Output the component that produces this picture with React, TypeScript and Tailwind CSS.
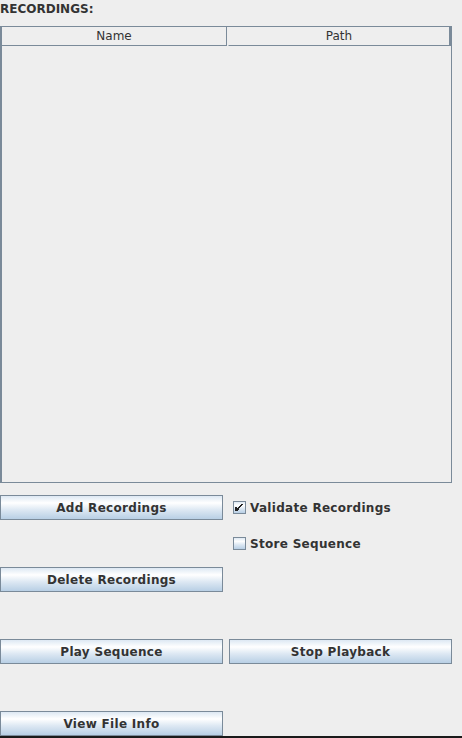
import React from "react";

const font = { fontFamily: '"DejaVu Sans", "Liberation Sans", sans-serif' };

function Btn({ label }: { label: string }) {
  return (
    <div className="h-[25px] border border-[#7a8a99] bg-[linear-gradient(to_bottom,#dde8f3_0%,#ffffff_30%,#dde8f3_60%,#b8cfe5_100%)] flex items-center justify-center text-[12px] font-bold text-[#333333] leading-none tracking-[0.3px]">
      {label}
    </div>
  );
}

function Check({ label, checked }: { label: string; checked?: boolean }) {
  return (
    <div className="h-[25px] flex items-center pl-[4px] gap-[4px]">
      <div className="w-[13px] h-[13px] border border-[#7a8a99] bg-[linear-gradient(to_bottom,#dde8f3_0%,#ffffff_30%,#dde8f3_60%,#b8cfe5_100%)] relative">
        {checked && (
          <svg width="11" height="11" viewBox="0 0 11 11" className="absolute left-0 top-0">
            <path d="M2 5 L2 9 M3 6 L3 9 M4 7 L4 8 M4 6.5 L8.5 2" stroke="#222" strokeWidth="1.4" fill="none" shapeRendering="crispEdges" />
          </svg>
        )}
      </div>
      <span className="text-[12px] font-bold text-[#333333] leading-none tracking-[0.3px]">{label}</span>
    </div>
  );
}

export default function App() {
  return (
    <div style={font} className="w-[462px] h-[738px] bg-[#eeeeee] flex flex-col overflow-hidden">
      <div className="h-[26px] pt-[2px] text-[12px] font-bold text-[#333333] leading-[14px]">RECORDINGS:</div>
      <div className="w-[452px] h-[457px] border border-[#7a8a99] border-l-2 flex flex-col">
        <div className="h-[19px] flex">
          <div className="w-[225px] border-r border-b border-[#7a8a99] flex items-center justify-center text-[12px] text-[#333333] leading-none">Name</div>
          <div className="w-[1px]"></div>
          <div className="flex-1 border-r-2 border-b border-l border-[#7a8a99] border-l-[#eeeeee] flex items-center justify-center text-[12px] text-[#333333] leading-none">Path</div>
        </div>
        <div className="flex-1"></div>
      </div>
      <div className="mt-[12px] grid grid-cols-[223px_223px] gap-x-[6px] gap-y-[11px]">
        <Btn label="Add Recordings" />
        <Check label="Validate Recordings" checked />
        <div className="h-[25px]"></div>
        <Check label="Store Sequence" />
        <Btn label="Delete Recordings" />
        <div className="h-[25px]"></div>
        <div className="h-[25px]"></div>
        <div className="h-[25px]"></div>
        <Btn label="Play Sequence" />
        <Btn label="Stop Playback" />
        <div className="h-[25px]"></div>
        <div className="h-[25px]"></div>
        <Btn label="View File Info" />
        <div className="h-[25px]"></div>
      </div>
      <div className="h-[2px] bg-[#1a1a1a]"></div>
    </div>
  );
}
